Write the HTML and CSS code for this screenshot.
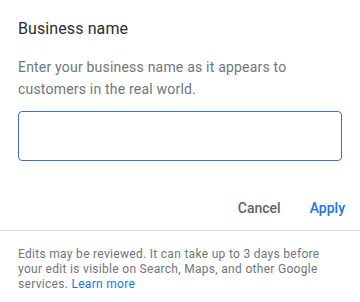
FILE: index.html
```html
<!DOCTYPE html>
<html>
<head>
<meta charset="utf-8">
<link rel="stylesheet" href="styles.css">
</head>
<body>
<div class="dialog">
  <div class="content">
    <h2 class="title">Business name</h2>
    <p class="desc">Enter your business name as it appears to customers in the real world.</p>
    <input class="field" type="text" aria-label="Business name">
    <div class="actions">
      <button class="btn cancel">Cancel</button>
      <button class="btn apply">Apply</button>
    </div>
  </div>
  <div class="footer">
    Edits may be reviewed. It can take up to 3 days before your edit is visible on Search, Maps, and other Google services. <a class="link" href="#">Learn more</a>
  </div>
</div>
</body>
</html>
```

FILE: styles.css
```css
* { box-sizing: border-box; }
html, body {
  margin: 0;
  padding: 0;
  background: #ffffff;
  font-family: Roboto, "Liberation Sans", Arial, sans-serif;
}
.dialog {
  width: 360px;
  display: flex;
  flex-direction: column;
}
.content {
  padding: 17px 18px 0 18px;
  display: flex;
  flex-direction: column;
}
.title {
  margin: 0;
  font-size: 16px;
  line-height: 24px;
  font-weight: 400;
  color: #2b2d30;
  letter-spacing: 0.1px;
}
.desc {
  margin: 15px 0 0 0;
  font-size: 14px;
  line-height: 22px;
  color: #70757a;
  letter-spacing: 0.2px;
}
.field {
  margin-top: 11px;
  width: 324px;
  height: 50px;
  border: 1px solid #4272c8;
  border-radius: 4px;
  outline: none;
  padding: 0 12px;
  font: inherit;
}
.actions {
  margin-top: 29px;
  display: flex;
  justify-content: flex-end;
  margin-right: -17px;
  height: 36px;
  align-items: center;
}
.btn {
  background: none;
  border: none;
  font-family: inherit;
  font-size: 14px;
  font-weight: 500;
  letter-spacing: 0;
  padding: 0 14px;
  height: 36px;
  cursor: pointer;
}
.cancel { color: #5f6368; padding-right: 15px; }
.apply { color: #1a73e8; }
.footer {
  margin-top: 4px;
  border-top: 1px solid #dadce0;
  padding: 16px 18px 0 18px;
  font-size: 12px;
  line-height: 15px;
  letter-spacing: 0.3px;
  color: #70757a;
}
.link {
  color: #1a73e8;
  text-decoration: none;
}
```
